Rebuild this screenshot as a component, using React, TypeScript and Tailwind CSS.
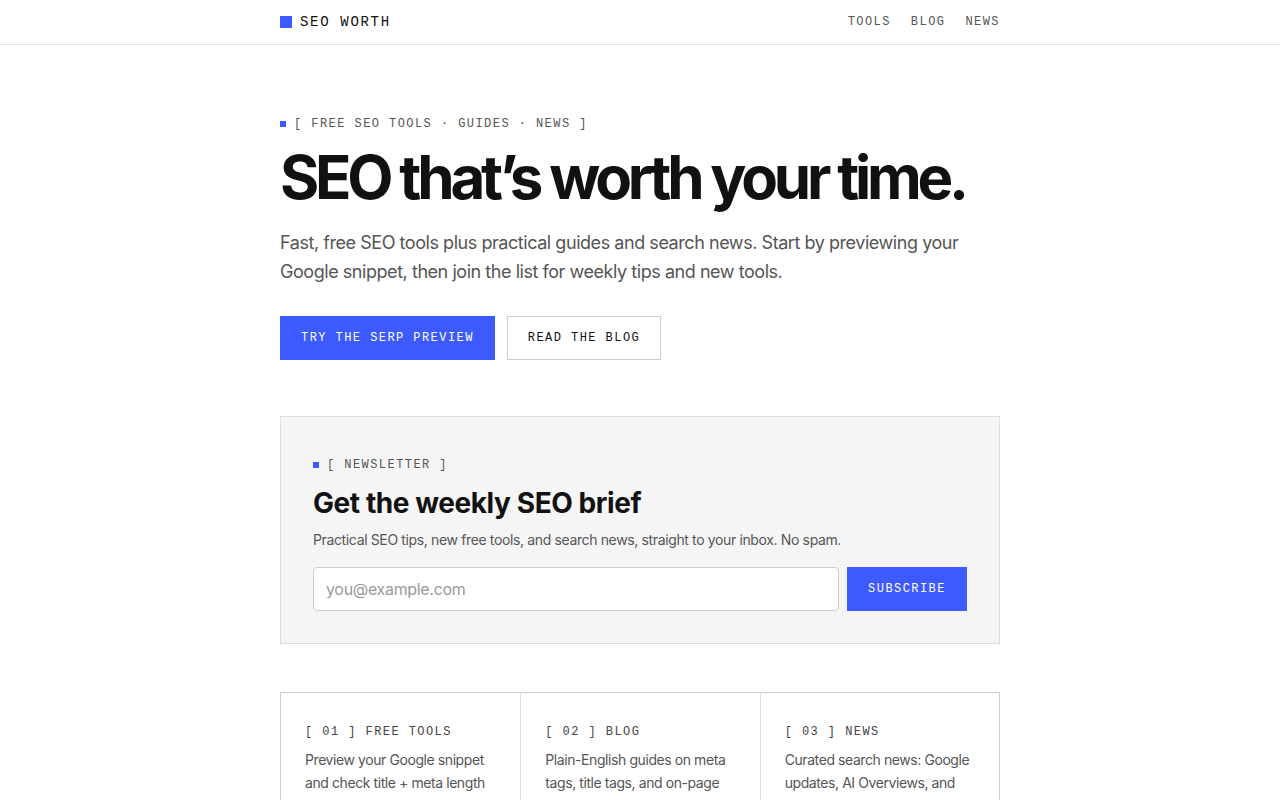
import React from "react";

const mono = "font-['Liberation_Mono','DejaVu_Sans_Mono',monospace]";
const sans = "font-['Inter','Noto_Sans',sans-serif]";

const Eyebrow = ({ children }: { children: React.ReactNode }) => (
  <div className={`flex items-center gap-2 ${mono} text-[12px] leading-[18px] uppercase tracking-[0.12em] text-[#555]`}>
    <span className="w-[6px] h-[6px] bg-[#3d5afe]" />
    <span>{children}</span>
  </div>
);

const cards = [
  {
    label: "[ 01 ] FREE TOOLS",
    text: "Preview your Google snippet and check title + meta length before you publish.",
  },
  {
    label: "[ 02 ] BLOG",
    text: "Plain-English guides on meta tags, title tags, and on-page SEO that actually moves rankings.",
  },
  {
    label: "[ 03 ] NEWS",
    text: "Curated search news: Google updates, AI Overviews, and what they mean for you.",
  },
];

const App = () => {
  return (
    <div className={`min-h-screen bg-white text-[#111] ${sans}`}>
      {/* Header */}
      <header className="border-b border-[#e2e2e2]">
        <div className="w-[720px] mx-auto h-[44px] flex items-center justify-between">
          <div className="flex items-center gap-2">
            <span className="w-[12px] h-[12px] bg-[#3d5afe]" />
            <span className={`${mono} text-[14px] tracking-[0.12em] text-[#111]`}>SEO WORTH</span>
          </div>
          <nav className={`flex gap-[20px] ${mono} text-[12px] tracking-[0.12em] text-[#555]`}>
            <a>TOOLS</a>
            <a>BLOG</a>
            <a>NEWS</a>
          </nav>
        </div>
      </header>

      <main className="w-[720px] mx-auto">
        {/* Hero */}
        <section className="pt-[70px]">
          <Eyebrow>[ Free SEO tools · Guides · News ]</Eyebrow>
          <h1 className="mt-[10px] text-[60px] leading-[68px] font-bold tracking-[-0.07em] whitespace-nowrap">
            SEO that’s worth your time.
          </h1>
          <p className="mt-[17px] text-[18px] leading-[29px] text-[#555] tracking-[-0.025em] max-w-[690px]">
            Fast, free SEO tools plus practical guides and search news. Start by previewing your
            Google snippet, then join the list for weekly tips and new tools.
          </p>
          <div className="mt-[30px] flex gap-[12px]">
            <button className={`h-[44px] px-[21px] bg-[#3d5afe] text-white ${mono} text-[12px] tracking-[0.12em]`}>
              TRY THE SERP PREVIEW
            </button>
            <button className={`h-[44px] px-[20px] border border-[#ccc] bg-white text-[#111] ${mono} text-[12px] tracking-[0.12em]`}>
              READ THE BLOG
            </button>
          </div>
        </section>

        {/* Newsletter */}
        <section className="mt-[56px] bg-[#f5f5f5] border border-[#ddd] px-[32px] pt-[39px] pb-[32px]">
          <Eyebrow>[ Newsletter ]</Eyebrow>
          <h2 className="mt-[12px] text-[28px] leading-[35px] font-bold tracking-[-0.015em]">
            Get the weekly SEO brief
          </h2>
          <p className="mt-[8px] text-[14px] leading-[22px] text-[#555] tracking-[-0.026em]">
            Practical SEO tips, new free tools, and search news, straight to your inbox. No spam.
          </p>
          <form className="mt-[16px] flex gap-[8px]">
            <input
              type="email"
              placeholder="you@example.com"
              className="flex-1 h-[44px] px-[12px] bg-white border border-[#ccc] rounded-[4px] text-[16px] tracking-[-0.02em] placeholder:text-[#999] outline-none"
            />
            <button
              type="button"
              className={`w-[120px] h-[44px] bg-[#3d5afe] text-white ${mono} text-[12px] tracking-[0.12em]`}
            >
              SUBSCRIBE
            </button>
          </form>
        </section>

        {/* Sections */}
        <section className="mt-[48px] mb-[64px] grid grid-cols-3 border border-[#ccc]">
          {cards.map((c, i) => (
            <div key={c.label} className={`px-[24px] pt-[30px] pb-[28px] ${i > 0 ? "border-l border-[#ddd]" : ""}`}>
              <div className={`${mono} text-[12px] leading-[18px] tracking-[0.12em] text-[#444]`}>{c.label}</div>
              <p className="mt-[7px] text-[14px] leading-[23px] text-[#555] tracking-[-0.03em]">{c.text}</p>
            </div>
          ))}
        </section>
      </main>
    </div>
  );
};

export default App;
